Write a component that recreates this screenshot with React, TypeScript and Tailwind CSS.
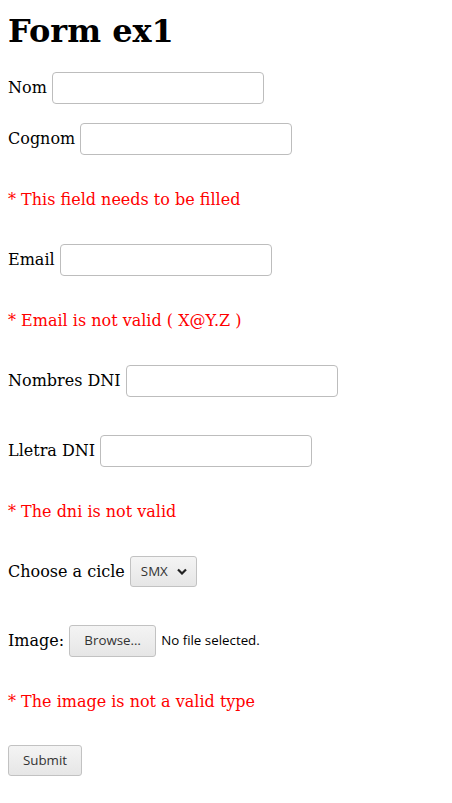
import React from "react";

const serif = "font-['DejaVu_Serif',serif]";
const sans = "font-['Open_Sans',sans-serif]";

const inputCls =
  "w-[212px] h-[32px] rounded-[4px] border border-[#bdbdbd] bg-white align-middle outline-none";
const btnCls =
  "rounded-[3px] border border-[#c2c2c2] bg-gradient-to-b from-[#f4f4f4] to-[#e6e6e6] text-[13.33px] text-[#333] " +
  sans;

function Field({ label, top }: { label: string; top: string }) {
  return (
    <div className={`flex items-center h-[32px] ${top}`}>
      <span className="mr-[5px]">{label}</span>
      <input type="text" className={inputCls} />
    </div>
  );
}

function Err({ text, top }: { text: string; top: string }) {
  return (
    <p className={`h-[24px] pt-[1px] leading-[24px] text-[#ff0000] ${top}`}>* {text}</p>
  );
}

export default function App() {
  return (
    <div className={`min-h-screen bg-white px-[8px] text-[16px] text-black ${serif}`}>
      <h1 className="pt-[13px] text-[32px] font-bold leading-[37px]">Form ex1</h1>
      <form onSubmit={(e) => e.preventDefault()}>
        <Field label="Nom" top="mt-[22px]" />
        <Field label="Cognom" top="mt-[19px]" />
        <Err text="This field needs to be filled" top="mt-[32px]" />
        <Field label="Email" top="mt-[33px]" />
        <Err text="Email is not valid ( X@Y.Z )" top="mt-[32px]" />
        <Field label="Nombres DNI" top="mt-[33px]" />
        <Field label="Lletra DNI" top="mt-[38px]" />
        <Err text="The dni is not valid" top="mt-[32px]" />
        <div className="mt-[33px] flex h-[31px] items-center">
          <span className="mr-[5px]">Choose a cicle</span>
          <div
            className={`${btnCls} flex h-[31px] w-[67px] items-center justify-between pl-[10px] pr-[9px]`}
          >
            <span>SMX</span>
            <svg width="10" height="7" viewBox="0 0 10 7">
              <path d="M1 1.5 L5 5.5 L9 1.5" fill="none" stroke="#222" strokeWidth="2.2" />
            </svg>
          </div>
        </div>
        <div className="mt-[38px] flex h-[32px] items-center">
          <span className="mr-[5px]">Image:</span>
          <button type="button" className={`${btnCls} h-[32px] w-[87px]`}>
            Browse…
          </button>
          <span className={`ml-[5px] text-[13.33px] text-black ${sans}`}>No file selected.</span>
        </div>
        <Err text="The image is not a valid type" top="mt-[32px]" />
        <button type="submit" className={`${btnCls} mt-[32px] h-[31px] w-[74px]`}>
          Submit
        </button>
      </form>
    </div>
  );
}
